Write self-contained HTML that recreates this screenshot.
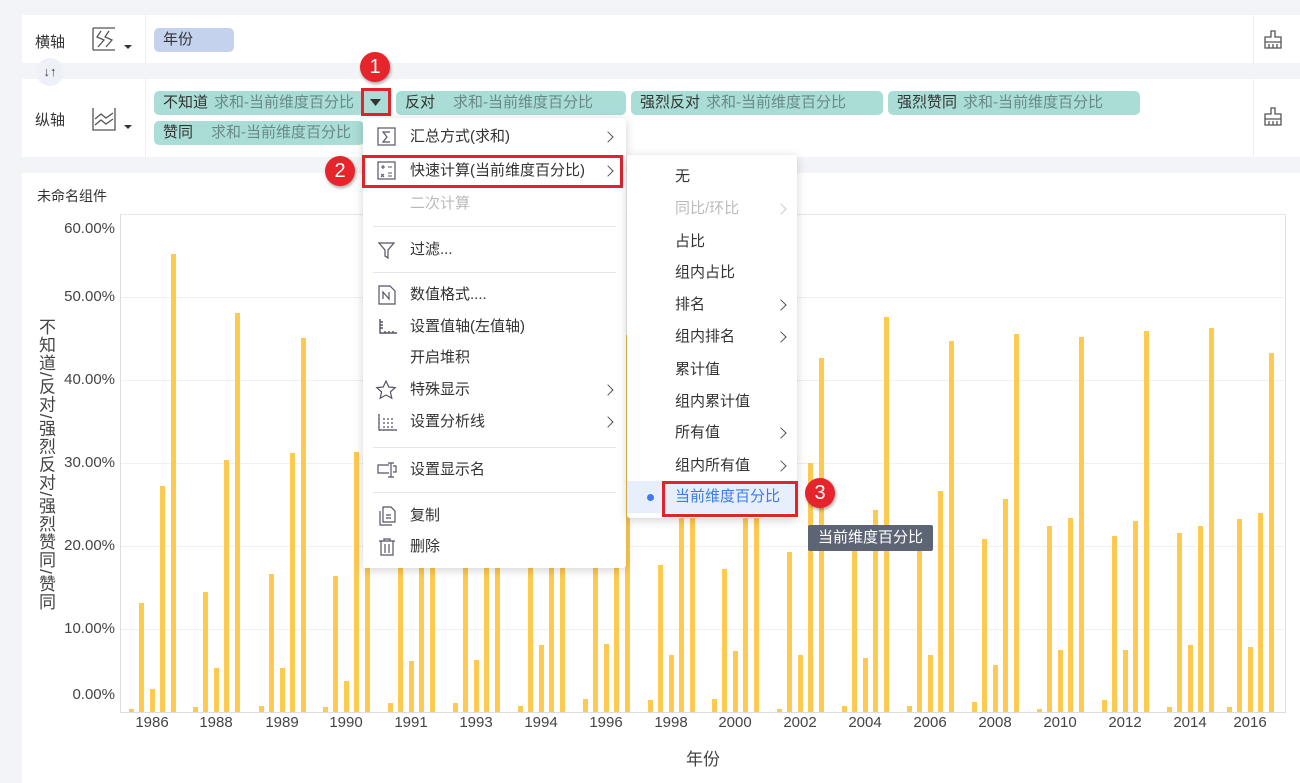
<!DOCTYPE html>
<html><head><meta charset="utf-8">
<style>
*{box-sizing:border-box;margin:0;padding:0}
body{width:1300px;height:783px;overflow:hidden;background:#f3f4f7;font-family:"Liberation Sans","Noto Sans CJK SC",sans-serif;font-size:15px;color:#333;position:relative}
.abs{position:absolute}
.panel{position:absolute;background:#fff}
.pill{position:absolute;height:24px;line-height:24px;border-radius:5px;padding-left:9px;white-space:nowrap;font-size:15px;color:#333;overflow:hidden}
.g{background:#a9ddd6}
.g span{color:#6a8a86;margin-left:9px}
.menu{position:absolute;background:#fff;border-radius:3px;box-shadow:0 2px 10px rgba(0,0,0,.18)}
.mi{position:absolute;left:0;right:0;height:30px;line-height:30px;font-size:15px;color:#333;white-space:nowrap}
.arr{position:absolute;top:9px;width:8px;height:8px;border-right:1.3px solid #555;border-top:1.3px solid #555;transform:rotate(45deg)}
.div{position:absolute;left:10px;right:10px;height:1px;background:#e6e6e6}
.red{position:absolute;border:3px solid #e2232a}
.num{position:absolute;width:30px;height:30px;border-radius:50%;background:#e5242b;color:#fff;font-size:20px;line-height:30px;text-align:center;box-shadow:1px 2px 3px rgba(0,0,0,.35)}
.bar{position:absolute;width:5px;background:#fdc94f}
.yl{position:absolute;right:1185px;font-size:15px;color:#444;line-height:16px}
.xl{position:absolute;top:714px;font-size:15px;color:#444;width:50px;text-align:center}
.gl{position:absolute;left:121px;width:1163px;height:1px;background:#f0f0f0}
</style></head><body>

<div class="panel" style="left:22px;top:15px;width:1278px;height:48px"></div>
<div class="panel" style="left:22px;top:79px;width:1278px;height:78px"></div>
<div class="abs" style="left:145px;top:15px;width:1px;height:48px;background:#eceef2"></div>
<div class="abs" style="left:145px;top:79px;width:1px;height:78px;background:#eceef2"></div>
<div class="abs" style="left:1253px;top:15px;width:1px;height:48px;background:#eceef2"></div>
<div class="abs" style="left:1253px;top:79px;width:1px;height:78px;background:#eceef2"></div>
<div class="abs" style="left:35px;top:31px">横轴</div>
<div class="abs" style="left:35px;top:109px">纵轴</div>
<svg class="abs" style="left:92px;top:27px" width="44" height="28" viewBox="0 0 44 28"><path d="M1 1v22M1 1h22M1 23h22" fill="none" stroke="#555" stroke-width="1.3"/><path d="M9 4l-4 6 7 3-6 7M17 4l-4 6 7 3-6 7" fill="none" stroke="#555" stroke-width="1.3"/><path d="M32 18h8l-4 4z" fill="#333"/></svg>
<svg class="abs" style="left:92px;top:107px" width="44" height="28" viewBox="0 0 44 28"><path d="M1 1v22h22V1" fill="none" stroke="#555" stroke-width="1.3"/><path d="M3 12l6-5 5 4 7-5M3 18l6-5 5 4 7-5" fill="none" stroke="#555" stroke-width="1.3"/><path d="M32 18h8l-4 4z" fill="#333"/></svg>
<div class="abs" style="left:36px;top:58px;width:28px;height:28px;border-radius:50%;background:#eef1f7;text-align:center;line-height:28px;font-size:13px;color:#444;font-weight:bold">↓↑</div>
<svg class="abs" style="left:1263px;top:30px" width="20" height="20" viewBox="0 0 20 20"><path d="M8 1h4v6h6v11H2V7h6z M2 12h16 M6 18v-4 M10 18v-4 M14 18v-4" fill="none" stroke="#555" stroke-width="1.3"/></svg>
<svg class="abs" style="left:1263px;top:107px" width="20" height="20" viewBox="0 0 20 20"><path d="M8 1h4v6h6v11H2V7h6z M2 12h16 M6 18v-4 M10 18v-4 M14 18v-4" fill="none" stroke="#555" stroke-width="1.3"/></svg>

<div class="pill" style="left:154px;top:28px;width:80px;background:#c4d2ee">年份</div>
<div class="pill g" style="left:154px;top:91px;width:210px">不知道<span style="margin-left:6px">求和-当前维度百分比</span></div>
<div class="abs" style="left:362px;top:91px;width:28px;height:24px;background:#a9ddd6"></div>
<div class="red" style="left:361px;top:88px;width:30px;height:28px"></div>
<svg class="abs" style="left:369px;top:98px" width="14" height="10"><path d="M1 1h11l-5.5 7z" fill="#333"/></svg>
<div class="pill g" style="left:396px;top:91px;width:230px">反对<span style="margin-left:18px">求和-当前维度百分比</span></div>
<div class="pill g" style="left:631px;top:91px;width:252px">强烈反对<span style="margin-left:6px">求和-当前维度百分比</span></div>
<div class="pill g" style="left:888px;top:91px;width:252px">强烈赞同<span style="margin-left:6px">求和-当前维度百分比</span></div>
<div class="pill g" style="left:154px;top:121px;width:210px">赞同<span style="margin-left:18px">求和-当前维度百分比</span></div>

<div class="panel" style="left:22px;top:173px;width:1278px;height:610px"></div>
<div class="abs" style="left:37px;top:186px;font-size:14px">未命名组件</div>
<div class="abs" style="left:120px;top:214px;width:1166px;height:499px;border:1px solid #ddd;border-top-color:#e8e8e8"></div>
<div class="gl" style="top:297px"></div><div class="gl" style="top:380px"></div><div class="gl" style="top:463px"></div><div class="gl" style="top:546px"></div><div class="gl" style="top:629px"></div>
<div class="yl" style="top:221px">60.00%</div>
<div class="yl" style="top:289px">50.00%</div>
<div class="yl" style="top:372px">40.00%</div>
<div class="yl" style="top:455px">30.00%</div>
<div class="yl" style="top:538px">20.00%</div>
<div class="yl" style="top:621px">10.00%</div>
<div class="yl" style="top:687px">0.00%</div>
<div class="abs" style="left:35px;top:318px;writing-mode:vertical-rl;font-size:17px;color:#444;line-height:20px;letter-spacing:1px">不知道/反对/强烈反对/强烈赞同/赞同</div>
<div class="abs" style="left:686px;top:745px;font-size:17px;color:#444">年份</div>
<div id="bars"></div>

<div class="menu" style="left:363px;top:118px;width:263px;height:450px">
 <div class="mi" style="top:4px;padding-left:47px">汇总方式(求和)<i class="arr" style="right:14px;top:11px"></i></div>
 <div class="mi" style="top:38px;padding-left:47px">快速计算(当前维度百分比)<i class="arr" style="right:14px;top:11px"></i></div>
 <div class="mi" style="top:71px;padding-left:47px;color:#bbb">二次计算</div>
 <div class="div" style="top:108px"></div>
 <div class="mi" style="top:117px;padding-left:47px">过滤...</div>
 <div class="div" style="top:154px"></div>
 <div class="mi" style="top:162px;padding-left:47px">数值格式....</div>
 <div class="mi" style="top:194px;padding-left:47px">设置值轴(左值轴)</div>
 <div class="mi" style="top:225px;padding-left:47px">开启堆积</div>
 <div class="mi" style="top:257px;padding-left:47px">特殊显示<i class="arr" style="right:14px;top:11px"></i></div>
 <div class="mi" style="top:289px;padding-left:47px">设置分析线<i class="arr" style="right:14px;top:11px"></i></div>
 <div class="div" style="top:329px"></div>
 <div class="mi" style="top:337px;padding-left:47px">设置显示名</div>
 <div class="div" style="top:374px"></div>
 <div class="mi" style="top:383px;padding-left:47px">复制</div>
 <div class="mi" style="top:414px;padding-left:47px">删除</div>
 <svg class="abs" style="left:14px;top:9px" width="20" height="20"><rect x="1" y="1" width="17" height="17" fill="none" stroke="#556" stroke-width="1.2"/><path d="M13 5H6l4 5-4 5h7" fill="none" stroke="#556" stroke-width="1.2"/></svg>
 <svg class="abs" style="left:14px;top:43px" width="20" height="20"><rect x="1" y="1" width="17" height="17" fill="none" stroke="#556" stroke-width="1.2"/><path d="M4 6h4M6 4v4M11 6h4M4 13l3 3M7 13l-3 3M11 12h4M11 15h4" fill="none" stroke="#556" stroke-width="1.1"/></svg>
 <svg class="abs" style="left:14px;top:122px" width="20" height="20"><path d="M2 3h15l-6 7v8l-3-2v-6z" fill="none" stroke="#556" stroke-width="1.2"/></svg>
 <svg class="abs" style="left:14px;top:167px" width="20" height="20"><path d="M2 1h11l5 5v13H2z" fill="none" stroke="#556" stroke-width="1.2"/><path d="M6 14V7l6 7V7" fill="none" stroke="#556" stroke-width="1.2"/></svg>
 <svg class="abs" style="left:14px;top:199px" width="22" height="20"><path d="M3 2v14h17M3 5h3M3 8h3M3 11h3M8 16v-2M12 16v-2M16 16v-2" fill="none" stroke="#556" stroke-width="1.4"/></svg>
 <svg class="abs" style="left:12px;top:261px" width="22" height="22"><path d="M11 2l2.8 6 6.4.6-4.8 4.3 1.4 6.3L11 16l-5.8 3.2 1.4-6.3L1.8 8.6 8.2 8z" fill="none" stroke="#556" stroke-width="1.2"/></svg>
 <svg class="abs" style="left:14px;top:294px" width="22" height="20"><path d="M2 2v16h18M6 7h12M6 11h12M6 15h12" fill="none" stroke="#556" stroke-width="1.2" stroke-dasharray="2 2"/><path d="M2 2v16h18" fill="none" stroke="#556" stroke-width="1.2"/></svg>
 <svg class="abs" style="left:14px;top:342px" width="22" height="20"><path d="M12 5H1v8h11M14 3v14M11 3h6M11 17h6M16 6h3v6h-3" fill="none" stroke="#556" stroke-width="1.2"/></svg>
 <svg class="abs" style="left:14px;top:388px" width="22" height="20"><path d="M6 1h8l4 4v11H6zM3 5v14h12M9 9h5M9 12h5" fill="none" stroke="#556" stroke-width="1.2"/></svg>
 <svg class="abs" style="left:14px;top:419px" width="22" height="20"><path d="M2 4h16M7 4V2h6v2M4 4v14h12V4M8 7v9M12 7v9" fill="none" stroke="#556" stroke-width="1.2"/></svg>
</div>
<div class="red" style="left:362px;top:155px;width:261px;height:33px"></div>

<div class="menu" style="left:627px;top:155px;width:170px;height:363px">
 <div class="mi" style="top:7px;padding-left:48px">无</div>
 <div class="mi" style="top:39px;padding-left:48px;color:#bbb">同比/环比<i class="arr" style="right:12px;top:11px;border-color:#ccc"></i></div>
 <div class="mi" style="top:72px;padding-left:48px">占比</div>
 <div class="mi" style="top:103px;padding-left:48px">组内占比</div>
 <div class="mi" style="top:135px;padding-left:48px">排名<i class="arr" style="right:12px;top:11px"></i></div>
 <div class="mi" style="top:167px;padding-left:48px">组内排名<i class="arr" style="right:12px;top:11px"></i></div>
 <div class="mi" style="top:200px;padding-left:48px">累计值</div>
 <div class="mi" style="top:232px;padding-left:48px">组内累计值</div>
 <div class="mi" style="top:263px;padding-left:48px">所有值<i class="arr" style="right:12px;top:11px"></i></div>
 <div class="mi" style="top:296px;padding-left:48px">组内所有值<i class="arr" style="right:12px;top:11px"></i></div>
 <div class="mi" style="top:326px;padding-left:48px;background:#e8effc;color:#3a7cf0;height:32px;line-height:32px">当前维度百分比</div>
 <div class="abs" style="left:20px;top:339px;width:7px;height:7px;border-radius:50%;background:#3a7cf0"></div>
</div>
<div class="red" style="left:662px;top:481px;width:136px;height:36px"></div>
<div class="abs" style="left:808px;top:525px;width:125px;height:26px;background:#5d6575;color:#fff;font-size:15px;line-height:26px;text-align:center;border-radius:2px">当前维度百分比</div>

<div class="num" style="left:360px;top:52px">1</div>
<div class="num" style="left:325px;top:156px">2</div>
<div class="num" style="left:805px;top:478px">3</div>

<script>
var years=["1986","1988","1989","1990","1991","1993","1994","1996","1998","2000","2002","2004","2006","2008","2010","2012","2014","2016"];
var cx=[152,216,282,346,411,476,541,606,671,735,800,865,930,995,1060,1125,1190,1250];
var tops=[[709,603,689,486,254],[707,592,668,460,313],[706,574,668,453,338],[707,576,681,452,300],[703,300,661,300,300],[703,300,660,300,300],[706,300,645,300,300],[699,300,644,300,335],[700,565,655,300,300],[699,569,651,300,300],[709,552,655,463,358],[706,530,658,510,317],[706,530,655,491,341],[702,539,665,499,334],[709,526,650,518,337],[700,536,650,521,331],[707,533,645,526,328],[707,519,647,513,353]];
var h="";
for(var i=0;i<18;i++){
 h+='<div class="xl" style="left:'+(cx[i]-25)+'px">'+years[i]+'</div>';
 var x0=cx[i]-23;
 for(var j=0;j<5;j++){var t=tops[i][j];h+='<div class="bar" style="left:'+(x0+j*10.4)+'px;top:'+t+'px;height:'+(712-t)+'px"></div>';}
}
document.getElementById("bars").innerHTML=h;
</script>
</body></html>
